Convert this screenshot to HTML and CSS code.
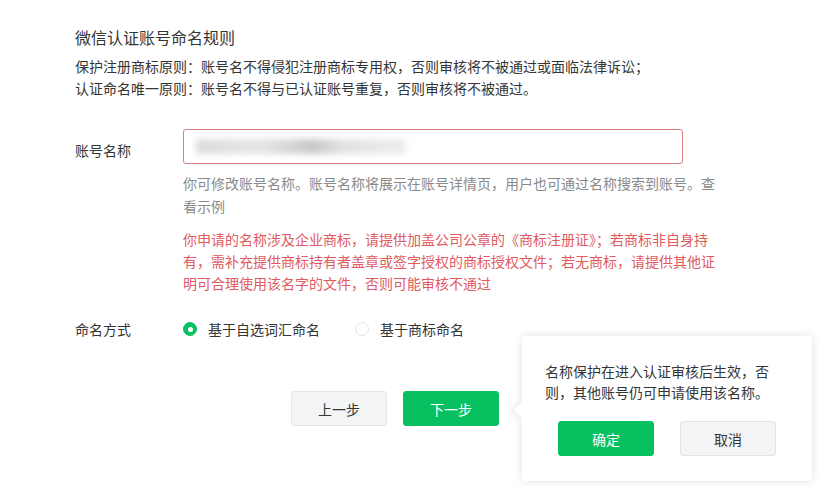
FILE: index.html
```html
<!DOCTYPE html>
<html lang="zh-CN">
<head>
<meta charset="utf-8">
<title>微信认证账号命名规则</title>
<link rel="stylesheet" href="styles.css">
</head>
<body>
<div class="page">
  <h2 class="title">微信认证账号命名规则</h2>
  <div class="rules">
    <p>保护注册商标原则：账号名不得侵犯注册商标专用权，否则审核将不被通过或面临法律诉讼；</p>
    <p>认证命名唯一原则：账号名不得与已认证账号重复，否则审核将不被通过。</p>
  </div>

  <div class="form">
    <div class="row row-name">
      <div class="label">账号名称</div>
      <div class="field">
        <div class="input"><span class="blur"></span></div>
        <p class="hint">你可修改账号名称。账号名称将展示在账号详情页，用户也可通过名称搜索到账号。查看示例</p>
        <p class="warn">你申请的名称涉及企业商标，请提供加盖公司公章的《商标注册证》；若商标非自身持有，需补充提供商标持有者盖章或签字授权的商标授权文件；若无商标，请提供其他证明可合理使用该名字的文件，否则可能审核不通过</p>
      </div>
    </div>

    <div class="row row-radio">
      <div class="label">命名方式</div>
      <div class="field radios">
        <label class="radio checked"><span class="dot"></span>基于自选词汇命名</label>
        <label class="radio"><span class="dot"></span>基于商标命名</label>
      </div>
    </div>

    <div class="actions">
      <button class="btn btn-default">上一步</button>
      <button class="btn btn-primary">下一步</button>
    </div>
  </div>
</div>

<div class="popover">
  <p class="pop-text">名称保护在进入认证审核后生效，否则，其他账号仍可申请使用该名称。</p>
  <div class="pop-actions">
    <button class="btn btn-primary">确定</button>
    <button class="btn btn-default">取消</button>
  </div>
</div>
</body>
</html>
```

FILE: styles.css
```css
* { box-sizing: border-box; }
html, body {
  margin: 0;
  padding: 0;
  background: #ffffff;
  font-family: "Noto Sans CJK SC", "Noto Sans", sans-serif;
  color: #353535;
}
p { margin: 0; }

.page {
  padding: 26px 0 0 75px;
  width: 715px;
}

.title {
  margin: 0;
  font-size: 16px;
  font-weight: normal;
  line-height: 22px;
  color: #353535;
}

.rules {
  margin-top: 7px;
  font-size: 14px;
  line-height: 22px;
  color: #353535;
}

.form { margin-top: 30px; }

.row {
  display: flex;
  align-items: flex-start;
}
.label {
  width: 108px;
  flex: none;
  font-size: 14px;
  color: #353535;
}
.row-name .label {
  line-height: 22px;
  padding-top: 10px;
}
.field { flex: 1; }

.input {
  width: 500px;
  height: 35px;
  border: 1px solid #dd7e7e;
  border-radius: 3px;
  display: flex;
  align-items: center;
  padding-left: 12px;
}
.blur {
  display: block;
  width: 210px;
  height: 15px;
  background: linear-gradient(90deg, #dcdcdc 0%, #e6e6e6 30%, #d6d6d6 45%, #c8c8c8 55%, #e2e2e2 70%, #eeeeee 100%);
  filter: blur(3px);
}

.hint {
  margin-top: 8px;
  width: 540px;
  font-size: 14px;
  line-height: 23px;
  color: #8a8a8a;
}
.warn {
  margin-top: 10px;
  width: 540px;
  font-size: 14px;
  line-height: 22px;
  color: #e05a5e;
}

.row-radio {
  margin-top: 24px;
  align-items: center;
  line-height: 22px;
}
.radios {
  display: flex;
  align-items: center;
  gap: 35px;
}
.radio {
  display: flex;
  align-items: center;
  gap: 11px;
  font-size: 14px;
  color: #353535;
}
.dot {
  width: 14px;
  height: 14px;
  border-radius: 50%;
  border: 1px solid #e3e3e3;
  background: #fff;
  display: flex;
  align-items: center;
  justify-content: center;
}
.radio.checked .dot {
  border-color: #07c160;
  background: #07c160;
}
.radio.checked .dot::after {
  content: "";
  width: 5px;
  height: 5px;
  border-radius: 50%;
  background: #fff;
}

.actions {
  margin-top: 51px;
  width: 640px;
  display: flex;
  justify-content: center;
  gap: 16px;
}

.btn {
  width: 96px;
  height: 35px;
  border-radius: 3px;
  font-family: inherit;
  font-size: 14px;
  cursor: pointer;
  padding: 0;
}
.btn-default {
  background: #f3f4f6;
  border: 1px solid #e3e4e6;
  color: #353535;
}
.btn-primary {
  background: #07c160;
  border: 1px solid #07c160;
  color: #ffffff;
}

.popover {
  position: absolute;
  left: 522px;
  top: 336px;
  width: 290px;
  height: 145px;
  background: #fff;
  border-radius: 3px;
  box-shadow: 0 0 10px rgba(0, 0, 0, 0.12);
  padding: 25px 36px 0 23px;
}
.popover::before {
  content: "";
  position: absolute;
  left: -6px;
  top: 68px;
  width: 12px;
  height: 12px;
  background: #fff;
  transform: rotate(45deg);
  box-shadow: -3px 3px 5px rgba(0, 0, 0, 0.06);
}
.pop-text {
  position: relative;
  font-size: 14px;
  line-height: 21px;
  color: #353535;
}
.pop-actions {
  margin: 18px -36px 0 -23px;
  display: flex;
  justify-content: center;
  gap: 26px;
}
```
